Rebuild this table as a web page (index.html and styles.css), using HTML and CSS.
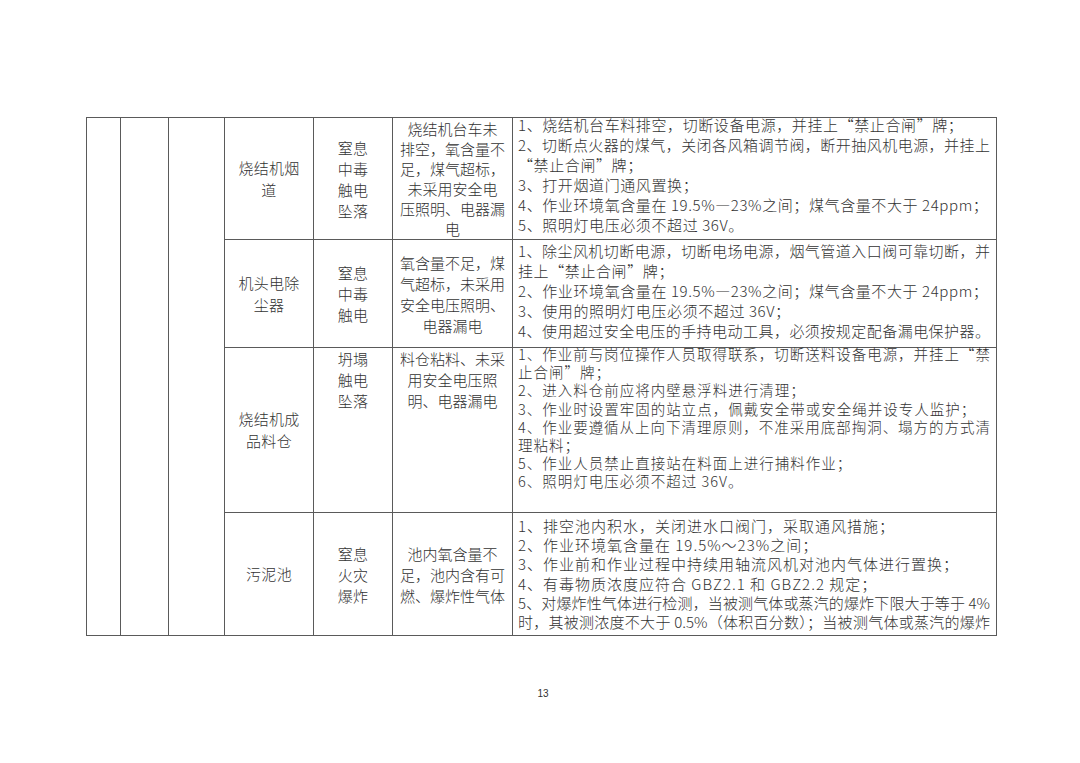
FILE: index.html
```html
<!DOCTYPE html>
<html lang="zh-CN">
<head>
<meta charset="utf-8">
<title>13</title>
<link rel="stylesheet" href="styles.css">
</head>
<body>
<div class="page">
  <table class="grid">
    <colgroup>
      <col class="c1"><col class="c2"><col class="c3"><col class="c4"><col class="c5"><col class="c6"><col class="c7">
    </colgroup>
    <tbody>
      <tr class="r1">
        <td rowspan="4"></td>
        <td rowspan="4"></td>
        <td rowspan="4"></td>
        <td class="place">烧结机烟<br>道</td>
        <td class="risk mid">窒息<br>中毒<br>触电<br>坠落</td>
        <td class="cause mid">烧结机台车未<br>排空，氧含量不<br>足，煤气超标，<br>未采用安全电<br>压照明、电器漏<br>电</td>
        <td class="steps">
          <div class="lines up3">
            <div class="ln">1、烧结机台车料排空，切断设备电源，并挂上“禁止合闸”牌；</div>
            <div class="ln full">2、切断点火器的煤气，关闭各风箱调节阀，断开抽风机电源，并挂上</div>
            <div class="ln">“禁止合闸”牌；</div>
            <div class="ln">3、打开烟道门通风置换；</div>
            <div class="ln">4、作业环境氧含量在 19.5%—23%之间；煤气含量不大于 24ppm；</div>
            <div class="ln">5、照明灯电压必须不超过 36V。</div>
          </div>
        </td>
      </tr>
      <tr class="r2">
        <td class="place">机头电除<br>尘器</td>
        <td class="risk mid">窒息<br>中毒<br>触电</td>
        <td class="cause mid">氧含量不足，煤<br>气超标，未采用<br>安全电压照明、<br>电器漏电</td>
        <td class="steps">
          <div class="lines dn1">
            <div class="ln full">1、除尘风机切断电源，切断电场电源，烟气管道入口阀可靠切断，并</div>
            <div class="ln">挂上“禁止合闸”牌；</div>
            <div class="ln">2、作业环境氧含量在 19.5%—23%之间；煤气含量不大于 24ppm；</div>
            <div class="ln">3、使用的照明灯电压必须不超过 36V；</div>
            <div class="ln full">4、使用超过安全电压的手持电动工具，必须按规定配备漏电保护器。</div>
          </div>
        </td>
      </tr>
      <tr class="r3">
        <td class="place">烧结机成<br>品料仓</td>
        <td class="risk top">坍塌<br>触电<br>坠落</td>
        <td class="cause top">料仓粘料、未采<br>用安全电压照<br>明、电器漏电</td>
        <td class="steps">
          <div class="lines up3 wide">
            <div class="ln full">1、作业前与岗位操作人员取得联系，切断送料设备电源，并挂上“禁</div>
            <div class="ln">止合闸”牌；</div>
            <div class="ln">2、进入料仓前应将内壁悬浮料进行清理；</div>
            <div class="ln">3、作业时设置牢固的站立点，佩戴安全带或安全绳并设专人监护；</div>
            <div class="ln full">4、作业要遵循从上向下清理原则，不准采用底部掏洞、塌方的方式清</div>
            <div class="ln">理粘料；</div>
            <div class="ln">5、作业人员禁止直接站在料面上进行捕料作业；</div>
            <div class="ln">6、照明灯电压必须不超过 36V。</div>
          </div>
        </td>
      </tr>
      <tr class="r4">
        <td class="place">污泥池</td>
        <td class="risk mid">窒息<br>火灾<br>爆炸</td>
        <td class="cause mid">池内氧含量不<br>足，池内含有可<br>燃、爆炸性气体</td>
        <td class="steps">
          <div class="lines dn3 wide">
            <div class="ln">1、排空池内积水，关闭进水口阀门，采取通风措施；</div>
            <div class="ln">2、作业环境氧含量在 19.5%～23%之间；</div>
            <div class="ln">3、作业前和作业过程中持续用轴流风机对池内气体进行置换；</div>
            <div class="ln">4、有毒物质浓度应符合 GBZ2.1 和 GBZ2.2 规定；</div>
            <div class="ln full">5、对爆炸性气体进行检测，当被测气体或蒸汽的爆炸下限大于等于 4%</div>
            <div class="ln full">时，其被测浓度不大于 0.5%（体积百分数）；当被测气体或蒸汽的爆炸</div>
          </div>
        </td>
      </tr>
    </tbody>
  </table>
  <div class="folio">13</div>
</div>
</body>
</html>
```

FILE: styles.css
```css
html, body {
  margin: 0;
  padding: 0;
  background: #ffffff;
}

.page {
  width: 1080px;
  height: 763px;
  padding: 117px 0 0 86px;
  box-sizing: border-box;
  font-family: "Noto Sans CJK SC", "Liberation Serif", serif;
  font-weight: 300;
  color: #333333;
}

.grid {
  border-collapse: collapse;
  table-layout: fixed;
  width: 910px;
}

.grid td {
  border: 1px solid #5a5a5a;
  padding: 0;
  font-size: 15px;
  overflow: visible;
}

.c1 { width: 34px; }
.c2 { width: 48px; }
.c3 { width: 56px; }
.c4 { width: 89px; }
.c5 { width: 79px; }
.c6 { width: 120px; }
.c7 { width: 484px; }

.r1 { height: 122px; }
.r2 { height: 108px; }
.r3 { height: 165px; }
.r4 { height: 123px; }

.place {
  text-align: center;
  vertical-align: middle;
  line-height: 22px;
  letter-spacing: 0.3px;
}

.risk,
.cause {
  text-align: center;
  white-space: nowrap;
  line-height: 21px;
  letter-spacing: 0.3px;
}

.cause {
  letter-spacing: 0;
}

.r1 .cause {
  line-height: 20px;
}

.mid { vertical-align: middle; }
.top { vertical-align: top; padding-top: 1px; }

.steps {
  vertical-align: top;
  padding: 0 6px 0 5px !important;
}

.lines {
  line-height: 20px;
  letter-spacing: 0.6px;
}

.r3 .lines {
  line-height: 18.2px;
  font-size: 14.5px;
}

.r4 .lines { line-height: 19.2px; }

.wide { letter-spacing: 1px; }

.up3 { margin-top: -3px; }
.dn1 { margin-top: 1px; }
.dn3 { margin-top: 3px; }

.ln {
  white-space: nowrap;
}

.ln.full {
  letter-spacing: 0;
  text-align: justify;
  text-align-last: justify;
}

.folio {
  width: 910px;
  margin-top: 52px;
  text-align: center;
  font-family: "Liberation Sans", Arial, sans-serif;
  font-weight: 400;
  font-size: 10px;
  color: #333;
  padding-left: 2px;
}
```
